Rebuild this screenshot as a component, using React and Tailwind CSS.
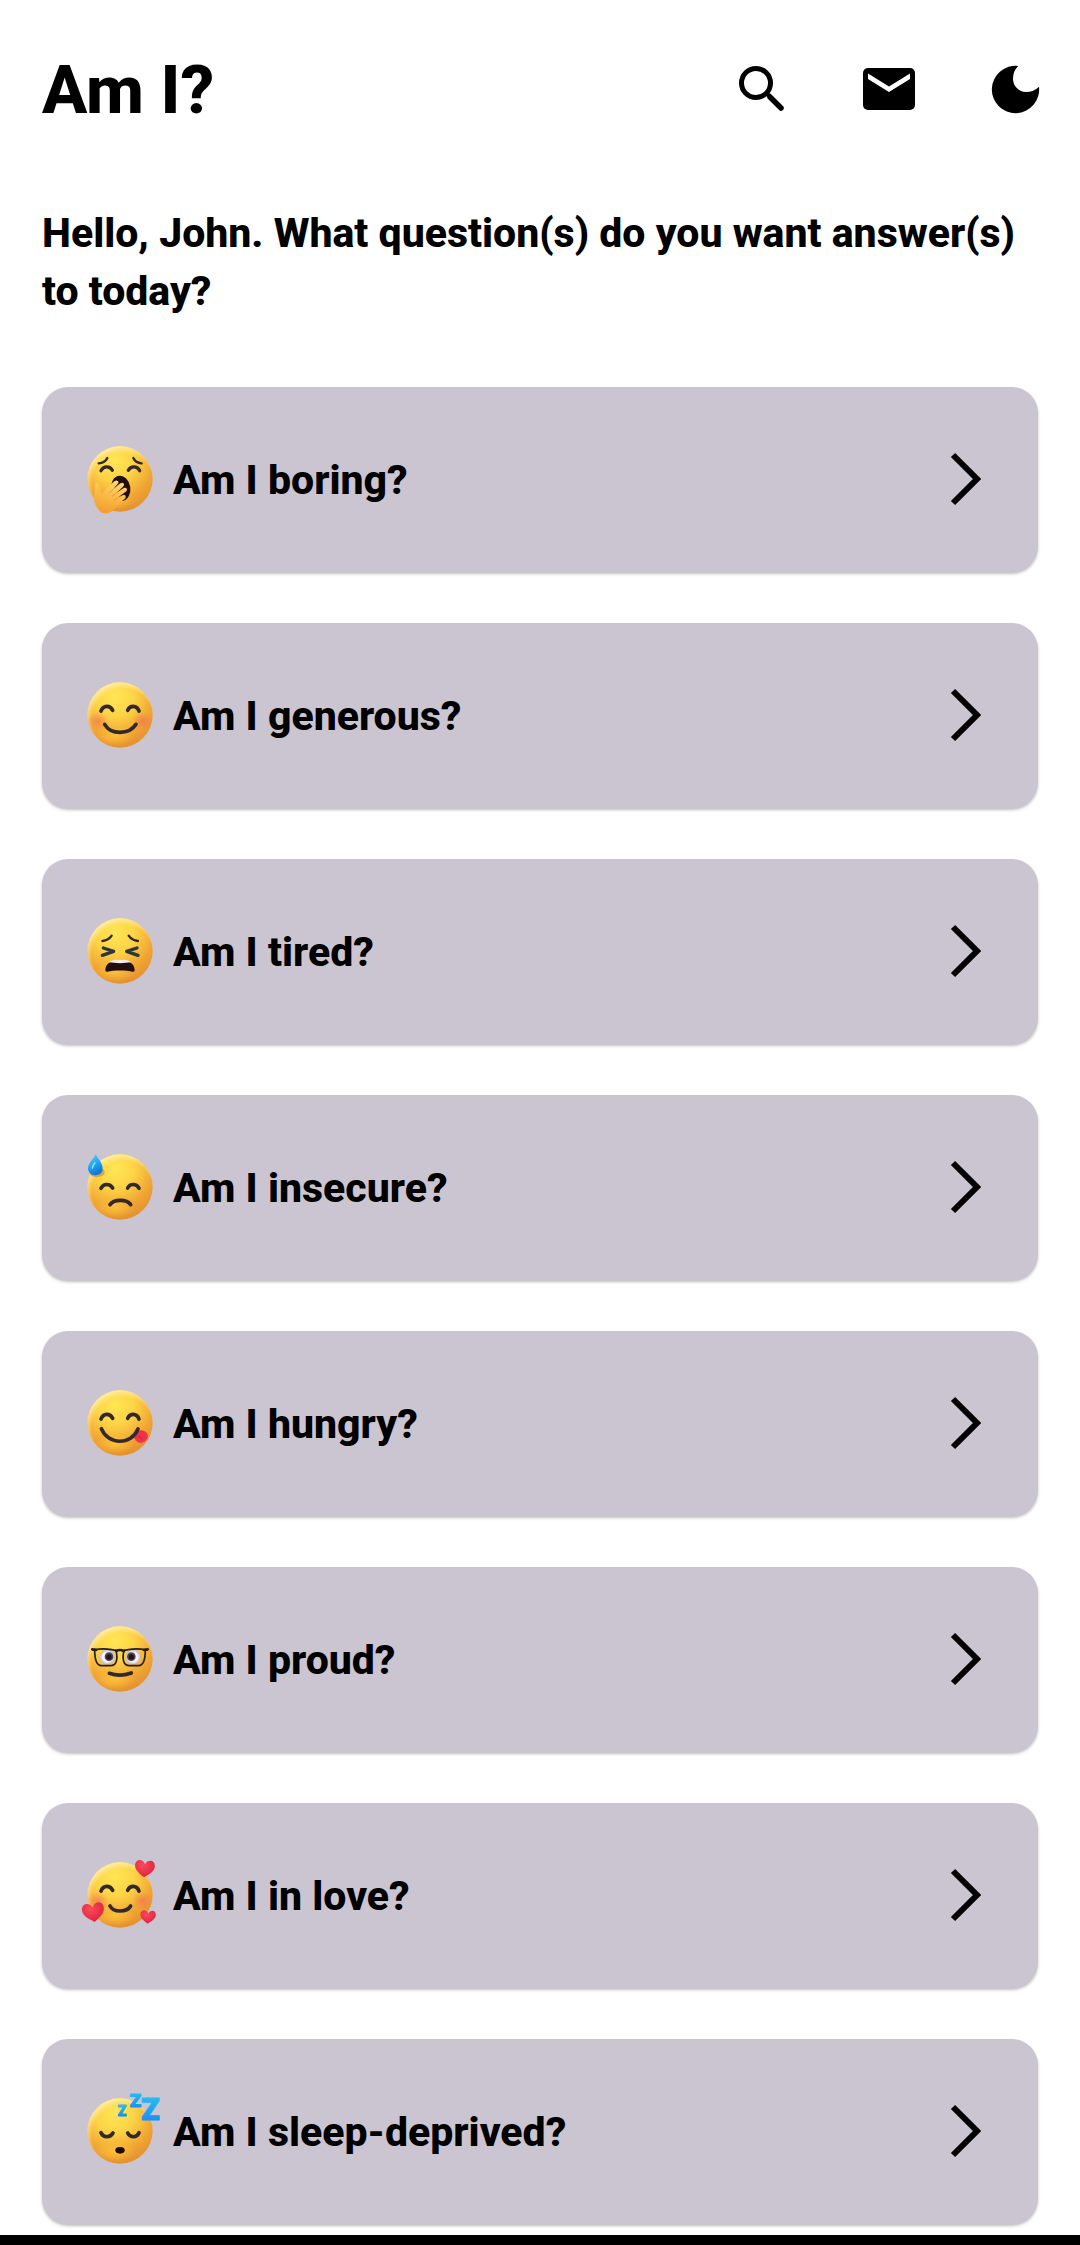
const INK = "#33292b";

// Gradients shared by every face
function FaceDefs() {
  return (
    <svg className="absolute h-0 w-0" aria-hidden="true">
      <defs>
        <radialGradient id="face" cx="0.42" cy="0.22" r="0.85">
          <stop offset="0" stopColor="#ffe655" />
          <stop offset="0.35" stopColor="#fdd446" />
          <stop offset="0.7" stopColor="#f0a533" />
          <stop offset="1" stopColor="#e08a30" />
        </radialGradient>
        <radialGradient id="rim" cx="0.54" cy="0.57" r="0.57">
          <stop offset="0.82" stopColor="#fff3c4" stopOpacity="0" />
          <stop offset="1" stopColor="#fff3c4" stopOpacity="0.7" />
        </radialGradient>
        <radialGradient id="glow">
          <stop offset="0" stopColor="#ffc83a" stopOpacity="0.8" />
          <stop offset="1" stopColor="#ffc83a" stopOpacity="0" />
        </radialGradient>
        <radialGradient id="blush">
          <stop offset="0" stopColor="#f4685a" stopOpacity="0.6" />
          <stop offset="1" stopColor="#f4685a" stopOpacity="0" />
        </radialGradient>
        <linearGradient id="hand" x1="0.6" y1="0" x2="0.3" y2="1">
          <stop offset="0" stopColor="#ffd76a" />
          <stop offset="0.6" stopColor="#f8b340" />
          <stop offset="1" stopColor="#f59c2c" />
        </linearGradient>
        <linearGradient id="drop" x1="0" y1="0" x2="0.4" y2="1">
          <stop offset="0" stopColor="#5ed0f8" />
          <stop offset="0.6" stopColor="#1ea4ef" />
          <stop offset="1" stopColor="#1577d6" />
        </linearGradient>
        <linearGradient id="zed" x1="0" y1="0" x2="0" y2="1">
          <stop offset="0" stopColor="#2cc4f2" />
          <stop offset="1" stopColor="#1485f5" />
        </linearGradient>
        <radialGradient id="heart" cx="0.4" cy="0.3" r="0.75">
          <stop offset="0" stopColor="#fb4a5c" />
          <stop offset="1" stopColor="#dc1f3c" />
        </radialGradient>
        <radialGradient id="eyeball">
          <stop offset="0.6" stopColor="#f7f4fa" />
          <stop offset="1" stopColor="#bdb2c4" />
        </radialGradient>
      </defs>
    </svg>
  );
}

function Face({ children }) {
  return (
    <svg
      className="h-[66px] w-[66px] shrink-0 overflow-visible"
      viewBox="-99 -96 198 198"
      fill="none"
      stroke={INK}
      strokeWidth="11"
      strokeLinecap="round"
      strokeLinejoin="round"
      aria-hidden="true"
    >
      <g stroke="none">
        <circle r="98" fill="url(#face)" />
        <ellipse cx="-15" cy="62" rx="60" ry="30" fill="url(#glow)" />
        <circle r="98" fill="url(#rim)" />
      </g>
      {children}
    </svg>
  );
}

function HappyEyes() {
  return <path d="M-57 -12 C-50 -30 -30 -30 -22 -14 M23 -14 C30 -30 50 -30 57 -12" />;
}

function Cheeks() {
  return (
    <g stroke="none" fill="url(#blush)">
      <ellipse cx="-66" cy="18" rx="32" ry="28" />
      <ellipse cx="68" cy="18" rx="32" ry="28" />
    </g>
  );
}

function Heart({ transform }) {
  return (
    <path
      transform={transform}
      stroke="none"
      fill="url(#heart)"
      d="M0 29 C-14 19 -33 8 -33 -10 C-33 -31 -9 -34 0 -15 C9 -34 33 -31 33 -10 C33 8 14 19 0 29 Z"
    />
  );
}

function Yawning() {
  return (
    <Face>
      <path strokeWidth="7" d="M-64 -47 Q-45 -48 -38 -63 M40 -63 Q46 -49 65 -47" />
      <path strokeWidth="10" d="M-57 -25 C-50 -40 -30 -40 -23 -26 M25 -26 C32 -40 52 -40 59 -25" />
      <ellipse cx="2" cy="28" rx="29" ry="38" fill="#250c12" stroke="none" transform="rotate(-8 2 28)" />
      <path d="M-8 58 Q5 48 18 60 Q4 68 -8 58 Z" fill="#8c2431" stroke="none" />
      <path
        d="M-75 26 C-77 10 -67 8 -63 20 L-56 48 C-47 36 -30 18 -16 6 C-8 1 -1 8 -7 15 L-21 31 L1 13 C9 7 17 16 9 23 L-11 42 L11 27 C20 23 25 32 17 38 L-5 55 L8 49 C17 46 21 54 13 60 C2 69 -9 83 -20 93 C-32 106 -53 106 -62 95 C-72 83 -80 68 -78 55 Z"
        fill="url(#hand)"
        stroke="none"
      />
      <path strokeWidth="2" stroke="#dd8a24" d="M-21 31 L-32 42 M-11 42 L-23 52 M-5 55 L-17 63" />
    </Face>
  );
}

function Smiling() {
  return (
    <Face>
      <Cheeks />
      <HappyEyes />
      <path d="M-46 28 C-28 60 28 60 48 28" />
    </Face>
  );
}

function Tired() {
  return (
    <Face>
      <path strokeWidth="7" d="M-53 -30 Q-34 -32 -25 -46 M26 -46 Q35 -32 54 -30" />
      <path strokeWidth="10" stroke="#2f3836" d="M-50 -9 L-19 1 L-53 13 M51 -9 L20 1 L54 13" />
      <path d="M-44 58 C-44 15 44 15 44 58 Q44 63 38 62 C20 57 -20 57 -38 62 Q-44 63 -44 58 Z" fill="#220d11" stroke="none" />
      <path d="M-34 34 C-20 22 20 22 34 34 Q0 39 -34 34 Z" fill="#f6ecec" stroke="none" />
    </Face>
  );
}

function Sweating() {
  return (
    <Face>
      <ellipse cx="-69" cy="-44" rx="23" ry="15" fill="#b87335" opacity="0.5" stroke="none" />
      <path d="M-57 4 C-50 -11 -30 -11 -22 3 M23 3 C30 -11 50 -11 57 4" />
      <path d="M-30 53 C-18 36 20 36 32 53" />
      <path d="M-73 -98 C-68 -86 -51 -72 -52 -54 C-53 -29 -94 -29 -96 -55 C-96 -73 -77 -85 -73 -98 Z" fill="url(#drop)" stroke="none" />
      <path d="M-83 -57 Q-81 -67 -75 -73" stroke="#9be4ff" strokeWidth="4" />
    </Face>
  );
}

function Savoring() {
  return (
    <Face>
      <path d="M38 39 L60 22 C73 20 87 31 83 43 C78 59 60 65 50 55 Z" fill="#f2304a" stroke="none" />
      <path d="M56 39 L67 48" stroke="#c9203b" strokeWidth="3" />
      <HappyEyes />
      <path d="M-56 17 C-36 67 34 67 54 18" />
    </Face>
  );
}

function Nerd() {
  return (
    <Face>
      <g stroke="none">
        <circle cx="-38" cy="-6" r="23" fill="url(#eyeball)" />
        <circle cx="39" cy="-6" r="23" fill="url(#eyeball)" />
        <circle cx="-33" cy="-7" r="13" fill="#51454b" />
        <circle cx="34" cy="-7" r="13" fill="#51454b" />
        <circle cx="-33" cy="-6" r="8" fill="#1c1719" />
        <circle cx="34" cy="-6" r="8" fill="#1c1719" />
      </g>
      <path
        strokeWidth="5"
        stroke="#241c20"
        d="M-76 -28 Q-44 -34 -12 -26 C-6 0 -10 20 -28 20 L-56 20 C-74 19 -76 -6 -76 -28 Z M76 -28 Q44 -34 12 -26 C6 0 10 20 28 20 L56 20 C74 19 76 -6 76 -28 Z"
      />
      <path strokeWidth="8" stroke="#241c20" d="M-83 -29 L-72 -27 M83 -29 L72 -27 M-12 -24 Q0 -30 12 -24" />
      <path d="M-32 43 Q0 54 34 42" />
    </Face>
  );
}

function Loving() {
  return (
    <Face>
      <Cheeks />
      <HappyEyes />
      <path d="M-30 33 C-20 53 20 53 32 33" />
      <Heart transform="translate(-80 52) rotate(-8)" />
      <Heart transform="translate(74 -79) rotate(5) scale(0.9)" />
      <Heart transform="translate(84 66) rotate(3) scale(0.7)" />
    </Face>
  );
}

function Sleeping() {
  return (
    <Face>
      <path d="M-57 5 C-50 21 -30 21 -21 6 M23 6 C31 21 50 21 57 5" />
      <ellipse cx="0" cy="58" rx="14" ry="10" fill="#1c0c0d" stroke="none" />
      <g
        className="font-['Roboto',sans-serif] font-black"
        fill="url(#zed)"
        stroke="url(#zed)"
        strokeWidth="3"
      >
        <text x="-7" y="-46" fontSize="42">Z</text>
        <text x="29" y="-72" fontSize="56">Z</text>
        <text x="63" y="-32" fontSize="92">Z</text>
      </g>
    </Face>
  );
}

function SearchIcon() {
  return (
    <svg className="h-16 w-16" viewBox="0 0 64 64" fill="none" stroke="currentColor" strokeWidth="5" aria-hidden="true">
      <circle cx="26" cy="25" r="14.500" />
      <path d="M37 36 L40 38" strokeWidth="4" />
      <path d="M40 39 L51 50" strokeLinecap="round" strokeWidth="5.500" />
    </svg>
  );
}

function MailIcon() {
  return (
    <svg className="h-16 w-16" viewBox="0 0 64 64" aria-hidden="true">
      <rect x="6" y="10" width="52" height="42" rx="5" fill="currentColor" />
      <path d="M11 15.500 L32 28.500 L53 15.500 V21 L32 34 L11 21 Z" fill="#fff" />
    </svg>
  );
}

function MoonIcon() {
  return (
    <svg className="h-16 w-16" viewBox="857 84 192 192" fill="currentColor" aria-hidden="true">
      <path d="M960 108 A71 71 0 1 0 1022 170 Q1006 186 983 186 A40 40 0 0 1 944 146 Q944 123 960 108 Z" />
    </svg>
  );
}

function ChevronIcon() {
  return (
    <svg className="h-14 w-8 shrink-0" viewBox="0 0 32 56" fill="none" stroke="currentColor" strokeWidth="6" aria-hidden="true">
      <path d="M3 3 L27 27 L3 51" />
    </svg>
  );
}

const questions = [
  { label: "Am I boring?", Icon: Yawning },
  { label: "Am I generous?", Icon: Smiling },
  { label: "Am I tired?", Icon: Tired },
  { label: "Am I insecure?", Icon: Sweating },
  { label: "Am I hungry?", Icon: Savoring },
  { label: "Am I proud?", Icon: Nerd },
  { label: "Am I in love?", Icon: Loving },
  { label: "Am I sleep-deprived?", Icon: Sleeping },
];

export default function App() {
  return (
    <div className="bg-white font-['Roboto',sans-serif] font-extrabold text-black">
      <FaceDefs />

      {/* Header */}
      <header className="flex items-center justify-between pt-[50px] pr-8 pl-[42px]">
        <h1 className="text-[67px] leading-[80px]">Am I?</h1>
        <div className="flex gap-[63px]">
          <button type="button" aria-label="Search">
            <SearchIcon />
          </button>
          <button type="button" aria-label="Messages">
            <MailIcon />
          </button>
          <button type="button" aria-label="Dark mode">
            <MoonIcon />
          </button>
        </div>
      </header>

      <main className="px-[42px] pt-[74px] pb-[11px]">
        <h2 className="text-[41px] leading-[58px]">
          Hello, John. What question(s) do you want answer(s) to today?
        </h2>

        {/* Questions */}
        <ul className="mt-[67px] flex flex-col gap-[51px]">
          {questions.map(({ label, Icon }) => (
            <li key={label}>
              <button
                type="button"
                className="flex h-[185px] w-full items-center rounded-[26px] bg-[#cbc5d2] pr-[56px] pl-[45px] text-left text-[41px] leading-[58px] shadow-[0_2px_3px_rgba(0,0,0,0.25)]"
              >
                <Icon />
                <span className="ml-5 flex-1">{label}</span>
                <ChevronIcon />
              </button>
            </li>
          ))}
        </ul>
      </main>

      <footer className="h-[10px] bg-black" />
    </div>
  );
}
